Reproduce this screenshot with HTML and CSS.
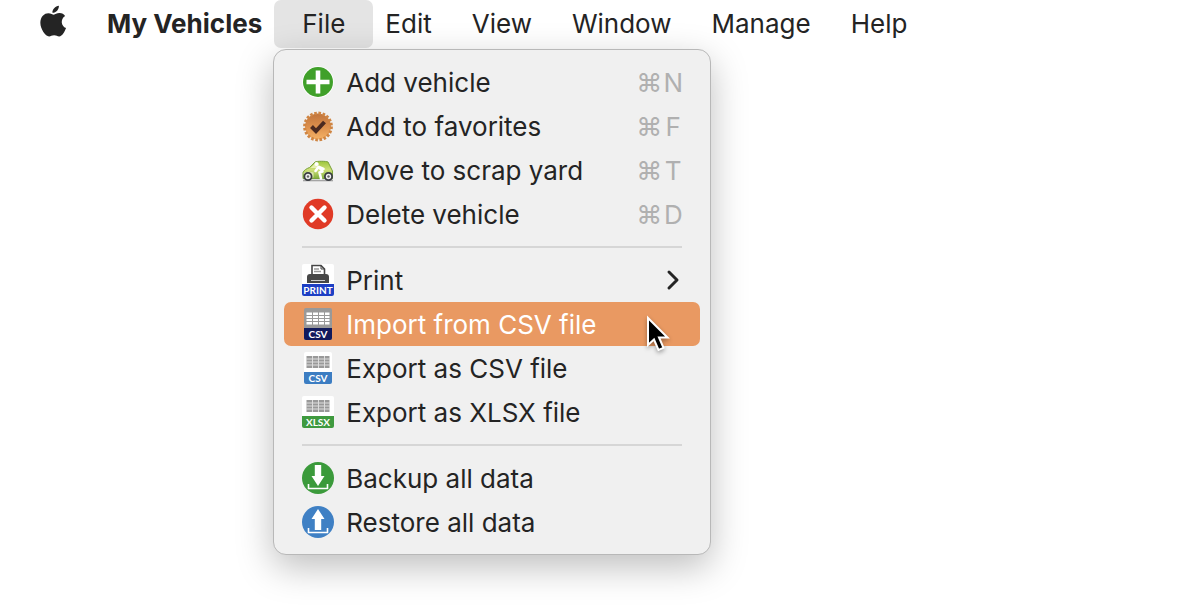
FILE: index.html
```html
<!DOCTYPE html>
<html lang="en">
<head>
    <meta charset="UTF-8">
    <meta name="viewport" content="width=device-width, initial-scale=1.0">
    <title>My Vehicles</title>
    <link rel="stylesheet" href="styles.css">
</head>
<body>
    <nav class="menubar">
        <button type="button" class="apple" aria-label="Apple menu">
            <svg width="29" height="36" viewBox="0 0 28 34">
                <path d="M19.2 1.2c.3 3.5-2.8 7-6.2 6.9C12.600 4.800 15.800 1.500 19.200 1.200zM14.300 9.900c1.300 0 3-1.600 5.600-1.500 2.300.1 4.200 1.100 5.300 2.800-4.800 3-4 9.800.9 11.700-1.200 3.300-3.700 8.100-6.600 8.100-1.900 0-2.600-1.200-4.900-1.200s-3.200 1.200-4.900 1.200C6.300 31 1.300 23.900 1.300 17.800c0-6.100 3.900-9.300 7.700-9.300 2.400 0 4.200 1.400 5.300 1.400z"/>
            </svg>
        </button>
        <button type="button" class="menu-title app-name">My Vehicles</button>
        <div class="menu-holder">
            <button type="button" class="menu-title open" aria-haspopup="true" aria-expanded="true">File</button>
            <div class="dropdown">
                <button type="button" class="item">
                    <svg class="icon" viewBox="0 0 32 32">
                        <circle cx="16" cy="16" r="15.800" fill="#fff"/>
                        <circle cx="16" cy="16" r="15" fill="#40a02a"/>
                        <path d="M16 4.500v23M4.500 16h23" stroke="#fff" stroke-width="4.600"/>
                    </svg>
                    <span class="label">Add vehicle</span>
                    <span class="shortcut">⌘<kbd>N</kbd></span>
                </button>
                <button type="button" class="item">
                    <svg class="icon" viewBox="0 0 32 32">
                        <defs>
                            <linearGradient id="seal" x1="0" y1="0" x2="0" y2="1">
                                <stop offset="0" stop-color="#c0743c"/>
                                <stop offset=".5" stop-color="#dc8f4c"/>
                                <stop offset="1" stop-color="#f5b266"/>
                            </linearGradient>
                        </defs>
                        <circle cx="16" cy="16.500" r="13" fill="url(#seal)"/>
                        <circle cx="16" cy="16.500" r="13.400" fill="none" stroke="#cf8543" stroke-width="3" stroke-dasharray="2.600 1.610"/>
                        <path d="M9.500 16.500l4.500 4.700 8.500-9.200" fill="none" stroke="#4b2a20" stroke-width="4"/>
                    </svg>
                    <span class="label">Add to favorites</span>
                    <span class="shortcut">⌘<kbd>F</kbd></span>
                </button>
                <button type="button" class="item">
                    <svg class="icon" viewBox="0 0 32 32">
                        <defs>
                            <linearGradient id="car" x1="0" y1="0" x2="0" y2="1">
                                <stop offset="0" stop-color="#9cc63a"/>
                                <stop offset=".5" stop-color="#cfe07a"/>
                                <stop offset="1" stop-color="#7fae3c"/>
                            </linearGradient>
                        </defs>
                        <path d="M1 26.500h30" stroke="#a5a5a5" stroke-width="1.600"/>
                        <path d="M1 24.500v-6c1-2.500 4-4 6.500-5L13 8c2-1 11-1 13 0l4.500 9v7.500z" fill="url(#car)" stroke="#7aa23c"/>
                        <path d="M8.500 14L13 9.500h4L15.500 14z" fill="#e6f0b4"/>
                        <path d="M1.500 19l5-1.500 5 1v5h-8z" fill="#dfe9b0"/>
                        <circle cx="14.500" cy="10" r="2" fill="#fff"/>
                        <path d="M16.500 13l-3 4M17 13l3.500 4.500-3 1 1.500 6M17 13l4.500 2" fill="none" stroke="#fff" stroke-width="2.600" stroke-linecap="round" stroke-linejoin="round"/>
                        <g fill="#eee" stroke="#3a3d42" stroke-width="1.800">
                            <circle cx="6" cy="22.500" r="3.600"/>
                            <circle cx="26.500" cy="22.500" r="3.600"/>
                        </g>
                        <circle cx="6" cy="22.500" r="1.200" fill="#666"/>
                        <circle cx="26.500" cy="22.500" r="1.200" fill="#666"/>
                    </svg>
                    <span class="label">Move to scrap yard</span>
                    <span class="shortcut">⌘<kbd>T</kbd></span>
                </button>
                <button type="button" class="item">
                    <svg class="icon" viewBox="0 0 32 32">
                        <circle cx="16" cy="16" r="15.200" fill="#e03a26"/>
                        <path d="M9.500 9.500l13 13M22.500 9.500l-13 13" stroke="#fff" stroke-width="4.400" stroke-linecap="round"/>
                    </svg>
                    <span class="label">Delete vehicle</span>
                    <span class="shortcut">⌘<kbd>D</kbd></span>
                </button>
                <hr>
                <button type="button" class="item" aria-haspopup="true">
                    <svg class="icon" viewBox="0 0 32 32">
                        <rect width="32" height="32" rx="2" fill="#fff"/>
                        <path d="M10 11V1.500h9l3.500 3.500v6" fill="#fff" stroke="#444" stroke-width="1.600"/>
                        <path d="M19 1.500V5h3.500" fill="none" stroke="#444"/>
                        <path d="M12 5h5M12 7.500h7" stroke="#999" stroke-width="1.400"/>
                        <path d="M5 13q0-3 3-3h16q3 0 3 3v6H5z" fill="#474747"/>
                        <path d="M9 16.500h14" stroke="#ccc"/>
                        <path d="M0 20h32v10a2 2 0 0 1-2 2H2a2 2 0 0 1-2-2z" fill="#1d3fc4"/>
                        <text class="tag" x="16" y="30">PRINT</text>
                    </svg>
                    <span class="label">Print</span>
                    <svg class="chevron" width="16" height="24" viewBox="0 0 16 24">
                        <path d="M3 4l8 8-8 8"/>
                    </svg>
                </button>
                <button type="button" class="item selected">
                    <svg class="icon" viewBox="0 0 32 32">
                        <rect x="2" width="28" height="32" rx="2" fill="#999"/>
                        <path d="M4.500 4.500h23v12h-23z" fill="#fff"/>
                        <path d="M4 7.500h24M4 10.500h24M4 13.500h24M10.500 4v13M16.500 4v13M22.500 4v13" stroke="#999"/>
                        <path d="M2 20h28v10a2 2 0 0 1-2 2H4a2 2 0 0 1-2-2z" fill="#111a5c"/>
                        <text class="tag" x="16" y="30">CSV</text>
                    </svg>
                    <span class="label">Import from CSV file</span>
                </button>
                <button type="button" class="item">
                    <svg class="icon" viewBox="0 0 32 32">
                        <rect x="2" width="28" height="32" rx="2" fill="#fff"/>
                        <path d="M4.500 4h23v12h-23z" fill="#999"/>
                        <path d="M4 7h24M4 10h24M4 13h24M10.500 4v12M16.500 4v12M22.500 4v12" stroke="#ddd"/>
                        <path d="M2 20h28v10a2 2 0 0 1-2 2H4a2 2 0 0 1-2-2z" fill="#3c7dc2"/>
                        <text class="tag" x="16" y="30">CSV</text>
                    </svg>
                    <span class="label">Export as CSV file</span>
                </button>
                <button type="button" class="item">
                    <svg class="icon" viewBox="0 0 32 32">
                        <rect width="32" height="32" rx="2" fill="#fff"/>
                        <path d="M4.500 4h23v12h-23z" fill="#999"/>
                        <path d="M4 7h24M4 10h24M4 13h24M10.500 4v12M16.500 4v12M22.500 4v12" stroke="#ddd"/>
                        <path d="M0 20h32v10a2 2 0 0 1-2 2H2a2 2 0 0 1-2-2z" fill="#3f9a3f"/>
                        <text class="tag" x="16" y="30">XLSX</text>
                    </svg>
                    <span class="label">Export as XLSX file</span>
                </button>
                <hr>
                <button type="button" class="item">
                    <svg class="icon" viewBox="0 0 32 32">
                        <circle cx="16" cy="16" r="16" fill="#3b9a3b"/>
                        <path d="M12.800 3h6.400v11h3.300L16 24l-6.500-10h3.300z" fill="#fff"/>
                        <path d="M6.500 22v4.500h19V22" fill="none" stroke="#fff" stroke-width="1.600"/>
                    </svg>
                    <span class="label">Backup all data</span>
                </button>
                <button type="button" class="item">
                    <svg class="icon" viewBox="0 0 32 32">
                        <circle cx="16" cy="16" r="16" fill="#3f80c4"/>
                        <path d="M12.800 24h6.400V13h3.300L16 3 9.500 13h3.300z" fill="#fff"/>
                        <path d="M6.500 22v4.500h19V22" fill="none" stroke="#fff" stroke-width="1.600"/>
                    </svg>
                    <span class="label">Restore all data</span>
                </button>
                <svg class="cursor" width="28" height="42" viewBox="0 0 28 42">
                    <path d="M3 4v27l6-5.500 4.500 10.500 5-2.200L14 23.500h8.500z"/>
                </svg>
            </div>
        </div>
        <button type="button" class="menu-title">Edit</button>
        <button type="button" class="menu-title">View</button>
        <button type="button" class="menu-title">Window</button>
        <button type="button" class="menu-title">Manage</button>
        <button type="button" class="menu-title">Help</button>
    </nav>
</body>
</html>
```
FILE: styles.css
```css
body {
    margin: 0;
    min-height: 100vh;
    background: #fff;
    color: #242424;
    font-family: Inter, "Liberation Sans", sans-serif;
    font-size: 26px;
}
button {
    border: none;
    background: none;
    color: inherit;
    font: inherit;
    text-align: left;
    white-space: nowrap;
}
.menubar {
    display: flex;
    height: 48px;
    padding-left: 39px;
}
.apple {
    display: flex;
    align-items: center;
    padding: 0 0 4px;
    margin-right: 19px;
    fill: #242424;
}
.menu-title {
    height: 48px;
    padding: 0 28px 2px;
    margin: 0 -8px;
    border-radius: 7px;
}
.app-name {
    font-weight: 700;
}
.menu-holder {
    position: relative;
    display: flex;
}
.open {
    background: #e4e4e4;
}
.dropdown {
    position: absolute;
    z-index: 1;
    top: 49px;
    left: -9px;
    box-sizing: border-box;
    width: 438px;
    padding: 10px;
    background: #f0f0f0;
    border: 1px solid #b8b8b8;
    border-radius: 13px;
    box-shadow: 0 12px 36px rgba(0, 0, 0, 0.26);
}
.item {
    display: flex;
    align-items: center;
    gap: 12px;
    width: 100%;
    height: 44px;
    padding: 0 18px;
    border-radius: 7px;
}
.selected {
    background: #e99962;
    color: #fff;
}
.icon {
    flex: none;
    width: 32px;
    height: 32px;
}
.label {
    flex: 1;
}
.shortcut {
    display: flex;
    gap: 2px;
    color: #b0b0b0;
}
.shortcut kbd {
    display: flex;
    justify-content: center;
    width: 18px;
    font: inherit;
}
.tag {
    fill: #fff;
    font-family: Lato, sans-serif;
    font-size: 10px;
    font-weight: 700;
    text-anchor: middle;
}
.chevron path {
    fill: none;
    stroke: #242424;
    stroke-width: 3;
    stroke-linecap: round;
    stroke-linejoin: round;
}
hr {
    height: 2px;
    margin: 10px 18px;
    border: none;
    background: #d6d6d6;
}
.cursor {
    position: absolute;
    top: 264px;
    left: 371px;
    fill: #000;
    stroke: #fff;
    stroke-width: 2;
    filter: drop-shadow(0 2px 2px rgba(0, 0, 0, 0.35));
}
```
